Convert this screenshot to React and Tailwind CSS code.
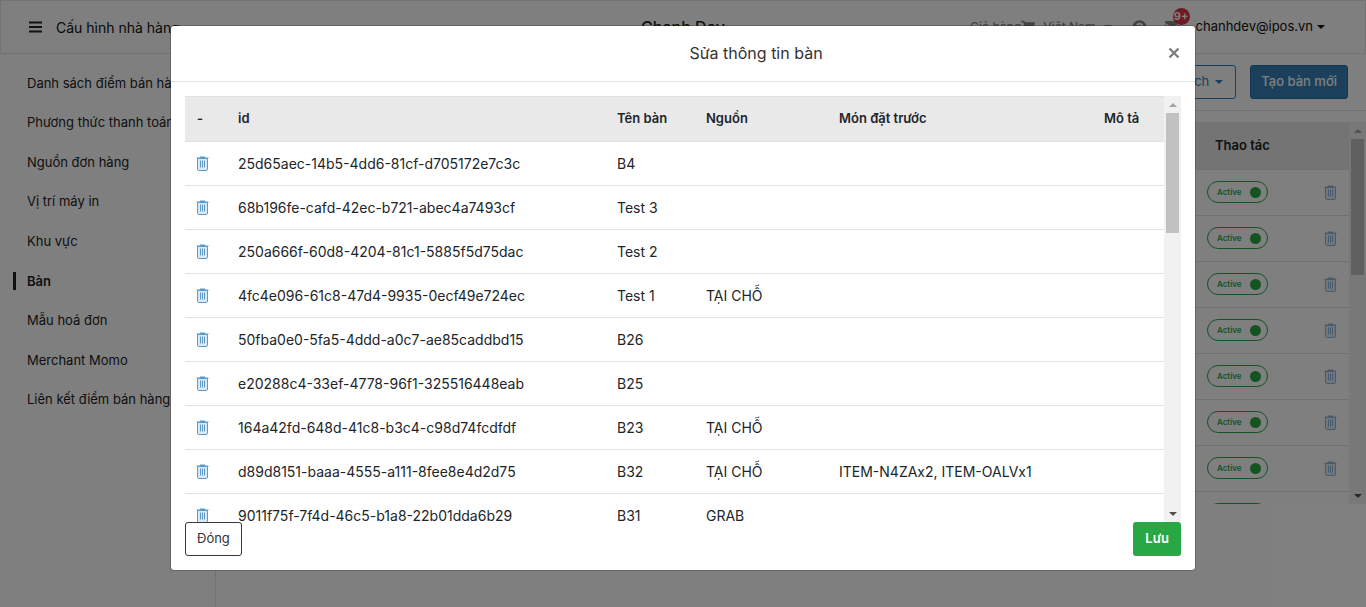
import React from "react";
import { FaShoppingCart, FaQuestionCircle } from "react-icons/fa";

const menu = [
  "Danh sách điểm bán hàng",
  "Phương thức thanh toán",
  "Nguồn đơn hàng",
  "Vị trí máy in",
  "Khu vực",
  "Bàn",
  "Mẫu hoá đơn",
  "Merchant Momo",
  "Liên kết điểm bán hàng",
];

const rows = [
  { id: "25d65aec-14b5-4dd6-81cf-d705172e7c3c", name: "B4" },
  { id: "68b196fe-cafd-42ec-b721-abec4a7493cf", name: "Test 3" },
  { id: "250a666f-60d8-4204-81c1-5885f5d75dac", name: "Test 2" },
  { id: "4fc4e096-61c8-47d4-9935-0ecf49e724ec", name: "Test 1", source: "TẠI CHỖ" },
  { id: "50fba0e0-5fa5-4ddd-a0c7-ae85caddbd15", name: "B26" },
  { id: "e20288c4-33ef-4778-96f1-325516448eab", name: "B25" },
  { id: "164a42fd-648d-41c8-b3c4-c98d74fcdfdf", name: "B23", source: "TẠI CHỖ" },
  { id: "d89d8151-baaa-4555-a111-8fee8e4d2d75", name: "B32", source: "TẠI CHỖ", items: "ITEM-N4ZAx2, ITEM-OALVx1" },
  { id: "9011f75f-7f4d-46c5-b1a8-22b01dda6b29", name: "B31", source: "GRAB" },
];

const activeRows = [1, 2, 3, 4, 5, 6, 7, 8];

function TrashIcon() {
  return (
    <svg width="13" height="15" viewBox="0 0 13 15" fill="none" aria-hidden="true">
      <path d="M4 0.500h5v1.500H4z" fill="#5a9acb" />
      <path d="M0.500 2h12" stroke="#5a9acb" />
      <path d="M1.500 2.500v10.700c0 .8.500 1.300 1.300 1.300h7.400c.8 0 1.300-.5 1.300-1.300V2.500z" fill="#dbe9f5" stroke="#5a9acb" />
      <path d="M4.500 4.500v7M6.500 4.500v7M8.500 4.500v7" stroke="#5a9acb" />
    </svg>
  );
}

function Caret({ className }) {
  return (
    <svg width="8" height="4" viewBox="0 0 8 4" className={className} aria-hidden="true">
      <path d="M0 0h8L4 4z" fill="currentColor" />
    </svg>
  );
}

function ScrollTrack({ thumb }) {
  return (
    <div className="flex w-[17px] shrink-0 flex-col items-center bg-[#f1f1f1]" aria-hidden="true">
      <div className="flex h-[17px] shrink-0 items-center">
        <Caret className="rotate-180 text-[#a3a3a3]" />
      </div>
      <div className={"w-[13px] bg-[#c1c1c1] " + thumb} />
      <div className="mt-auto flex h-[17px] shrink-0 items-center">
        <Caret className="text-[#505050]" />
      </div>
    </div>
  );
}

function TopBar() {
  return (
    <header className="flex h-[54px] items-center border border-[#e7e7e7] bg-[#fefefe] pl-7 pr-10">
      <div className="flex flex-1 items-center gap-[14px]">
        <button type="button" aria-label="Menu">
          <svg width="13" height="12" viewBox="0 0 13 12" aria-hidden="true">
            <path d="M0 1.500h13M0 6h13M0 10.500h13" stroke="#222" strokeWidth="1.800" />
          </svg>
        </button>
        <span className="text-[14px] text-[#111]">Cấu hình nhà hàng</span>
      </div>
      <span className="pl-3 text-base font-medium text-[#222]">Chanh Dev</span>
      <div className="flex flex-1 items-center justify-end text-[#888]">
        <a href="#cart" className="flex items-center whitespace-nowrap text-[12px] font-medium">
          Giỏ hàng
          <FaShoppingCart size={14} />
        </a>
        <a href="#lang" className="ml-2 flex items-center gap-2 whitespace-nowrap text-[12px] font-medium">
          Việt Nam
          <Caret />
        </a>
        <button type="button" aria-label="Trợ giúp" className="ml-5">
          <FaQuestionCircle size={15} />
        </button>
        <button type="button" aria-label="Thông báo" className="relative ml-[18px]">
          <svg width="15" height="12" viewBox="0 0 15 12" aria-hidden="true">
            <path d="M0 0h15v2L7.500 6.500 0 2zM0 3.500l7.500 4.500L15 3.500V12H0z" fill="currentColor" />
          </svg>
          <span className="absolute -top-[13px] left-2 flex size-[17px] items-center justify-center rounded-full bg-[#dc3545] text-[11px] font-bold text-white">
            9+
          </span>
        </button>
        <button type="button" className="ml-4 flex items-center gap-1 text-[13px] text-[#111]">
          chanhdev@ipos.vn
          <Caret />
        </button>
      </div>
    </header>
  );
}

function Page() {
  return (
    <div className="flex h-full flex-col">
      <TopBar />
      <div className="flex min-h-0 flex-1">
        <nav className="w-[216px] shrink-0 border-r border-[#e7e7e7] pt-[9px]">
          <div className="grid h-[356px] auto-rows-fr">
            {menu.map((item) => (
              <a key={item} href="#menu" className="flex items-center whitespace-nowrap pl-[13px] text-[13px] text-[#222]">
                <span className={"h-[18px] border-l-[3px] pl-[11px] leading-[18px] " + (item === "Bàn" ? "border-[#222] font-semibold" : "border-transparent")}>
                  {item}
                </span>
              </a>
            ))}
          </div>
        </nav>
        <main className="min-w-0 flex-1">
          <div className="flex h-[57px] items-center justify-end gap-[14px] border-b border-[#e2e2e2] pr-[18px]">
            <button type="button" className="flex h-[34px] items-center gap-[6px] rounded-[3px] border border-[#2f80bd] px-3 text-[13px] text-[#2f80bd]">
              Tiện ích
              <Caret />
            </button>
            <button type="button" className="h-[34px] rounded-[3px] border border-[#1f6fb0] bg-[#3781b6] px-[10px] text-[13px] font-medium text-white">
              Tạo bàn mới
            </button>
          </div>
          <div className="mt-[11px] flex h-[382px] overflow-hidden">
            <div className="flex-1 overflow-hidden">
              <table className="w-full table-fixed border-collapse">
                <thead>
                  <tr className="h-[47px] border-b border-[#dee2e6] bg-[#e9e9e9]">
                    <th className="text-left text-[13px] font-semibold">Tên bàn</th>
                    <th className="w-[154px] pl-5 text-left text-[13px] font-semibold text-[#222]">Thao tác</th>
                  </tr>
                </thead>
                <tbody>
                  {activeRows.map((n) => (
                    <tr key={n} className="h-[46px] border-b border-[#dee2e6]">
                      <td />
                      <td className="pl-3 pr-3">
                        <div className="flex items-center justify-between">
                          <button type="button" role="switch" aria-checked="true" className="flex h-[22px] w-[61px] items-center justify-between rounded-full border border-[#28a745] pl-[9px] pr-[6px] text-[8px] font-semibold text-[#28a745]">
                            Active
                            <span className="size-[11px] rounded-full bg-[#28a745]" />
                          </button>
                          <button type="button" aria-label="Xoá bàn" className="opacity-70">
                            <TrashIcon />
                          </button>
                        </div>
                      </td>
                    </tr>
                  ))}
                </tbody>
              </table>
            </div>
            <ScrollTrack thumb="h-[136px]" />
          </div>
        </main>
      </div>
    </div>
  );
}

function EditDialog() {
  return (
    <section role="dialog" aria-modal="true" aria-labelledby="dialog-title" className="w-full max-w-[1026px] rounded-[4px] border border-black/20 bg-white bg-clip-padding">
      <header className="flex h-[56px] items-center border-b border-[#dee2e6] px-[14px] pb-[2px]">
        <h1 id="dialog-title" className="flex-1 pl-[160px] text-center text-base text-[#333]">
          Sửa thông tin bàn
        </h1>
        <button type="button" aria-label="Đóng hộp thoại" className="flex w-[14px] justify-center">
          <svg width="12" height="12" viewBox="0 0 12 12" aria-hidden="true">
            <path d="M1.500 1.500l9 9M10.500 1.500l-9 9" stroke="#7f7f7f" strokeWidth="2.400" />
          </svg>
        </button>
      </header>
      <div className="p-[14px]">
        <div className="flex h-[426px] overflow-hidden">
          <div className="min-w-0 flex-1 overflow-hidden">
            <table className="w-full table-fixed border-collapse text-left text-[14px] text-[#212529]">
              <colgroup>
                <col className="w-[41px]" />
                <col />
                <col className="w-[89px]" />
                <col className="w-[133px]" />
                <col className="w-[265px]" />
                <col className="w-[72px]" />
              </colgroup>
              <thead>
                <tr className="h-[45px] border-y border-[#dee2e6] bg-[#e9e9e9] text-[13px]">
                  {["-", "id", "Tên bàn", "Nguồn", "Món đặt trước", "Mô tả"].map((h) => (
                    <th key={h} className="whitespace-nowrap px-3 font-semibold">{h}</th>
                  ))}
                </tr>
              </thead>
              <tbody>
                {rows.map((row) => (
                  <tr key={row.id} className="h-[44px] border-b border-[#dee2e6]">
                    <td className="pl-[11px]">
                      <button type="button" aria-label={"Xoá " + row.name} className="block">
                        <TrashIcon />
                      </button>
                    </td>
                    <td className="px-3">{row.id}</td>
                    <td className="px-3">{row.name}</td>
                    <td className="px-3">{row.source}</td>
                    <td className="whitespace-nowrap px-3">{row.items}</td>
                    <td className="px-3" />
                  </tr>
                ))}
              </tbody>
            </table>
          </div>
          <ScrollTrack thumb="h-[120px]" />
        </div>
        <footer className="flex justify-between">
          <button type="button" className="h-[34px] rounded-[3px] border border-[#343a40] px-[11px] text-[13px] text-[#333]">
            Đóng
          </button>
          <button type="button" className="h-[34px] rounded-[3px] bg-[#28a745] px-3 text-[13px] font-semibold text-white">
            Lưu
          </button>
        </footer>
      </div>
    </section>
  );
}

export default function App() {
  return (
    <div className="relative h-screen overflow-hidden bg-white font-['Inter','Liberation_Sans',sans-serif]">
      <Page />
      <div className="absolute inset-0 flex items-start justify-center bg-black/50 pt-[25px]">
        <EditDialog />
      </div>
    </div>
  );
}
